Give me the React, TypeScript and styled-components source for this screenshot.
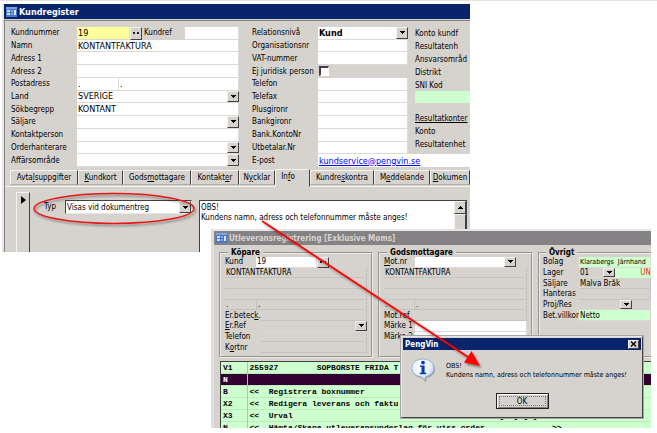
import React from "react";
import styled, { createGlobalStyle, css } from "styled-components";

const face = "#d6d3ce";
const navy = "#08246b";
const mint = "#ceffce";
const shade = "#848284";

const Global = createGlobalStyle`
  *, *::before, *::after { box-sizing: border-box; }
  body { margin: 0; background: #fff; color: #000; }
  body, input, select, textarea, button {
    font-family: "DejaVu Sans Condensed", "DejaVu Sans", Tahoma, sans-serif;
    font-size: 8px;
  }
  u { text-decoration-thickness: 1px; text-underline-offset: 1px; }
`;

const Desktop = styled.main`
  position: relative;
  border-top: 1px solid #e4e2de;
  padding: 3px 6px 5px 2px;
  overflow: hidden;
`;

const AppWindow = styled.section`
  height: 248px;
  margin-right: 181px;
  background: ${face};
  border-left: 2px solid #e8e6e2;
  overflow: hidden;
`;

const TitleBar = styled.header<{ $inactive?: boolean; $size: number }>`
  display: flex;
  align-items: center;
  gap: 2px;
  height: ${(p) => p.$size}px;
  padding: 0 2px;
  background: ${(p) => (p.$inactive ? shade : navy)};
  color: ${(p) => (p.$inactive ? face : "#fff")};
`;

const Title = styled.h2<{ $size: number }>`
  margin: 0;
  flex: 1;
  font-size: ${(p) => p.$size}px;
  font-weight: bold;
  white-space: pre;
`;

const Client = styled.div`
  margin-top: 1px;
  border-top: 1px solid ${shade};
  border-left: 1px solid ${shade};
  height: 100%;
`;

const FormColumns = styled.div`
  display: flex;
  gap: 13px;
  height: 146px;
  padding: 6px 0 0 6px;
`;

const RowGrid = styled.div<{ $width?: number; $rows: number; $height: number }>`
  display: grid;
  grid-template-rows: repeat(${(p) => p.$rows}, 1fr);
  height: ${(p) => p.$height}px;
  ${(p) => (p.$width ? css`flex: 0 0 ${p.$width}px;` : css`flex: 1 1 0;`)}
  min-width: 0;
`;

const Row = styled.div<{ $label: number }>`
  display: grid;
  grid-template-columns: ${(p) => p.$label}px minmax(0, 1fr);
  align-items: stretch;
  min-height: 0;
`;

const Label = styled.label<{ $width?: number }>`
  display: flex;
  align-items: center;
  white-space: pre;
  line-height: 10px;
  ${(p) =>
    p.$width &&
    css`
      flex: 0 0 ${p.$width}px;
      padding-left: 2px;
    `}
`;

const Cell = styled.div<{ $right?: number }>`
  display: flex;
  min-width: 0;
  min-height: 0;
  margin-right: ${(p) => p.$right ?? 0}px;
`;

type Tone = "white" | "yellow" | "mint" | "flat";
const tones: Record<Tone, string> = { white: "#fff", yellow: "#ffff9c", mint, flat: face };

const Input = styled.input<{ $tone?: Tone; $width?: number; $size?: number }>`
  ${(p) => (p.$width ? css`flex: 0 0 ${p.$width}px; width: ${p.$width}px;` : css`flex: 1 1 0; width: 100%;`)}
  min-width: 0;
  height: 100%;
  padding: 0 1px;
  border: 0;
  border-bottom: 1px solid ${(p) => (p.$tone === "flat" ? "#c6c3be" : "#dcdad6")};
  border-right: 1px solid ${(p) => (p.$tone === "flat" ? "#c6c3be" : "#dcdad6")};
  border-radius: 0;
  outline: 0;
  background: ${(p) => tones[p.$tone ?? "white"]};
  font-size: ${(p) => p.$size ?? 9}px;
`;

const Select = styled.select<{ $bold?: boolean; $size?: number }>`
  appearance: none;
  flex: 1 1 0;
  min-width: 0;
  height: 100%;
  padding: 0 1px;
  border: 0;
  border-radius: 0;
  outline: 0;
  background: inherit;
  color: #000;
  font-size: ${(p) => p.$size ?? 9}px;
  font-weight: ${(p) => (p.$bold ? "bold" : "normal")};
`;

const ComboFrame = styled.div<{ $tone?: Tone; $sunken?: boolean; $width?: number }>`
  display: flex;
  ${(p) => (p.$width ? css`flex: 0 0 ${p.$width}px;` : css`flex: 1 1 0;`)}
  min-width: 0;
  height: 100%;
  background: ${(p) => tones[p.$tone ?? "white"]};
  border-bottom: 1px solid #dcdad6;
  ${(p) =>
    p.$sunken &&
    css`
      border: 1px solid #e8e6e2;
      border-top-color: #424142;
      border-left-color: #424142;
    `}
`;

const raised = css`
  background: ${face};
  border: 1px solid;
  border-color: #f4f3f0 #424142 #424142 #f4f3f0;
`;

const DropMark = styled.span`
  ${raised}
  flex: 0 0 12px;
  display: grid;
  place-items: center;
  pointer-events: none;
`;

const MoreButton = styled.button`
  ${raised}
  flex: 0 0 12px;
  display: grid;
  place-items: center;
  padding: 0;
`;

const Arrow = ({ up }: { up?: boolean }) => (
  <svg width="5" height="3" viewBox="0 0 5 3" aria-hidden="true" shapeRendering="crispEdges">
    <path d={up ? "M0 3h5L2.5 0z" : "M0 0h5L2.5 3z"} fill="#000" />
  </svg>
);

const Dots = () => (
  <svg width="6" height="2" viewBox="0 0 6 2" aria-hidden="true">
    <path d="M0 0h2v2H0zM4 0h2v2H4z" fill="#222" />
  </svg>
);

const FormIcon = () => (
  <svg width="11" height="10" viewBox="0 0 11 10" aria-hidden="true">
    <rect width="11" height="10" fill="#4a78c8" />
    <rect width="11" height="2" fill="#7ba3e6" />
    <path d="M1 4h3M1 7h3" stroke="#fff" strokeWidth="1.6" />
    <path d="M5 4h2M5 7h2" stroke="#b8cff4" strokeWidth="1.2" />
    <rect x="8" y="3" width="2" height="5" fill="#dbe7fb" />
  </svg>
);

type ComboProps = {
  id: string;
  value?: string;
  bold?: boolean;
  tone?: Tone;
  sunken?: boolean;
  width?: number;
  size?: number;
};

const Combo = ({ id, value = "", bold, tone, sunken, width, size }: ComboProps) => (
  <ComboFrame $tone={tone} $sunken={sunken} $width={width}>
    <Select id={id} $bold={bold} $size={size} defaultValue={value}>
      <option value={value}>{value}</option>
    </Select>
    <DropMark>
      <Arrow />
    </DropMark>
  </ComboFrame>
);

const SideColumn = styled.div`
  display: flex;
  flex-direction: column;
  flex: 0 0 55px;
  margin-left: -68px;
  height: 124px;
`;

const SideLabel = styled.label`
  line-height: 13px;
  height: 13px;
  white-space: nowrap;
`;

const SideHeading = styled.span`
  margin-top: 9px;
  line-height: 13px;
  text-decoration: underline;
  white-space: nowrap;
`;

const SniInput = styled.input`
  width: 100%;
  height: 12px;
  margin-top: -1px;
  border: 0;
  padding: 0;
  background: ${mint};
`;

const Check = styled.input`
  appearance: none;
  width: 10px;
  height: 10px;
  margin: 1px;
  background: #fff;
  border: 1px solid #fff;
  border-top: 2px solid #424142;
  border-left: 2px solid #424142;
`;

const MailLink = styled.a`
  display: flex;
  align-items: center;
  flex: 1;
  background: #fff;
  color: #0000ff;
  padding-left: 1px;
  font-size: 9px;
  white-space: nowrap;
`;

const Tabs = styled.nav`
  display: flex;
  align-items: flex-end;
  height: 20px;
  padding-left: 5px;
  border-bottom: 1px solid #f4f3f0;
`;

const Tab = styled.button<{ $width: number; $active?: boolean }>`
  flex: 0 0 ${(p) => p.$width}px;
  height: ${(p) => (p.$active ? 18 : 15)}px;
  margin: ${(p) => (p.$active ? "0 0 -1px" : "0 0 1px")};
  padding: ${(p) => (p.$active ? "0 9px 3px 0" : "0")};
  background: ${face};
  border: 1px solid #f4f3f0;
  border-right: 1px solid #424142;
  border-bottom-color: ${(p) => (p.$active ? face : "#b0aeaa")};
  white-space: nowrap;
  overflow: hidden;
`;

const Sheet = styled.div`
  display: flex;
  padding: 5px 3px 0 11px;
`;

const Selector = styled.div`
  flex: 0 0 14px;
  height: 60px;
  border-left: 1px solid #f4f3f0;
  border-top: 1px solid #f4f3f0;
  border-right: 1px solid #424142;
  padding: 3px 0 0 4px;
`;

const TypeField = styled.div`
  display: grid;
  grid-template-columns: 21px 127px;
  height: 14px;
  margin: 8px 7px 0 14px;
`;

const NoteBox = styled.div`
  display: flex;
  flex: 1;
  height: 54px;
  margin-top: 8px;
  border: 1px solid #424142;
  background: #fff;
`;

const Note = styled.textarea`
  flex: 1;
  min-width: 0;
  padding: 2px 1px 0;
  border: 0;
  outline: 0;
  resize: none;
  overflow: hidden;
  white-space: pre;
  background: transparent;
  font-size: 8px;
  line-height: 10px;
`;

const Scroll = styled.div`
  flex: 0 0 12px;
  background: #f0efec;
  display: grid;
  grid-template-rows: 13px 1fr;
`;

const ScrollPart = styled.span`
  ${raised}
  display: grid;
  place-items: center;
`;

const DeliveryWindow = styled.section`
  position: relative;
  height: 199px;
  margin: -23px 0 0 209px;
  background: ${face};
  border-top: 2px solid #e8e6e2;
  border-left: 3px solid #e0deda;
  overflow: hidden;
`;

const Groups = styled.div`
  display: flex;
  gap: 5px;
  padding: 3px 0 0 5px;
`;

const Group = styled.fieldset<{ $width?: number }>`
  ${(p) => (p.$width ? css`flex: 0 0 ${p.$width}px;` : css`flex: 1 1 0;`)}
  min-width: 0;
  height: 110px;
  margin: 0;
  padding: 0 4px;
  border: 2px groove #eceae6;
  ${(p) => !p.$width && css`border-right: 0; padding: 0 0 0 3px;`}
`;

const Legend = styled.legend`
  margin-left: 3px;
  padding: 0 3px;
  font-size: 8px;
  line-height: 9px;
  font-weight: bold;
`;

const ListFrame = styled.div`
  margin: 3px 0 0 6px;
  border-top: 1px solid #424142;
  border-left: 1px solid #424142;
  background: ${mint};
`;

const ListTable = styled.table`
  width: 100%;
  table-layout: fixed;
  border-collapse: collapse;
  font-family: "Liberation Mono", "Courier New", monospace;
  font-size: 8px;
  font-weight: bold;
  line-height: 12px;
`;

const ListRow = styled.tr<{ $picked?: boolean }>`
  height: 12px;
  background: ${(p) => (p.$picked ? "#310031" : mint)};
  color: ${(p) => (p.$picked ? "#fff" : "#000")};
  box-shadow: inset 0 -1px #bcecbc;
`;

const ListCell = styled.td<{ $code?: boolean }>`
  width: ${(p) => (p.$code ? "26px" : "auto")};
  padding: 0 0 0 2px;
  border-right: ${(p) => (p.$code ? "1px solid #a9c9a9" : "0")};
  white-space: pre;
  overflow: hidden;
`;

const Warn = styled.output`
  display: flex;
  flex: 1;
  align-items: center;
  justify-content: flex-end;
  background: ${mint};
  color: #f03020;
  overflow: hidden;
`;

const Dialog = styled.section`
  position: absolute;
  top: 335px;
  right: 14px;
  width: 242px;
  z-index: 2;
  background: ${face};
  border: 1px solid;
  border-color: #e8e6e2 #424142 #424142 #e8e6e2;
  padding: 1px;
  box-shadow: 0 0 0 1px #a8a6a2;
`;

const CloseButton = styled.button`
  ${raised}
  width: 11px;
  height: 9px;
  padding: 0;
  display: grid;
  place-items: center;
`;

const Message = styled.div`
  display: flex;
  gap: 11px;
  padding: 8px 0 0 8px;
`;

const MessageText = styled.p`
  margin: 4px 0 0;
  font-size: 7px;
  line-height: 9px;
  white-space: pre;
`;

const DialogActions = styled.div`
  display: flex;
  justify-content: center;
  padding: 10px 0 7px;
`;

const OkButton = styled.button`
  width: 53px;
  height: 16px;
  padding: 0;
  background: ${face};
  border: 1px solid #222;
  box-shadow: inset 1px 1px #fff, inset -1px -1px ${shade};
  outline: 1px dotted #777;
  outline-offset: -4px;
`;

const Overlay = styled.svg`
  position: absolute;
  top: -1px;
  left: 0;
  z-index: 3;
  pointer-events: none;
`;

const BubbleSvg = styled.svg`
  flex: none;
`;

const InfoBubble = () => (
  <BubbleSvg width="24" height="25" viewBox="0 0 24 25" aria-hidden="true">
    <defs>
      <radialGradient id="bubble" cx="0.4" cy="0.3" r="0.75">
        <stop offset="0" stopColor="#fff" />
        <stop offset="0.6" stopColor="#e9f0fb" />
        <stop offset="1" stopColor="#9db8de" />
      </radialGradient>
    </defs>
    <path
      d="M12 1C5.8 1 1 4.8 1 10c0 4.400 3.400 7.600 8 8.600l1.500.3 3.500 4.300.6-4.500c5-1 8.400-4.300 8.400-8.700C23 4.800 18.200 1 12 1z"
      transform="translate(1 1.500)"
      fill="#8d8b88"
      opacity="0.6"
    />
    <path
      d="M12 1C5.800 1 1 4.800 1 10c0 4.400 3.400 7.600 8 8.600l1.500.3 3.500 4.300.6-4.500c5-1 8.400-4.300 8.400-8.700C23 4.800 18.200 1 12 1z"
      fill="url(#bubble)"
      stroke="#7f9cc8"
      strokeWidth="0.7"
    />
    <circle cx="12" cy="4.600" r="1.900" fill="#0a3ab0" />
    <path d="M9 7.600h4.600v7.200h1.600v1.500H8.800v-1.500h1.700V9.100H9z" fill="#0a3ab0" />
  </BubbleSvg>
);

type FormRow = { label: string; value?: string; kind?: "combo" };

const leftRows: FormRow[] = [
  { label: "Namn", value: "KONTANTFAKTURA" },
  { label: "Adress 1" },
  { label: "Adress 2" },
];
const lowerRows: FormRow[] = [
  { label: "Land", value: "SVERIGE", kind: "combo" },
  { label: "Sökbegrepp", value: "KONTANT" },
  { label: "Säljare", kind: "combo" },
  { label: "Kontaktperson" },
  { label: "Orderhanterare", kind: "combo" },
  { label: "Affärsområde", kind: "combo" },
];

const renderRow = (r: FormRow) => (
  <Row $label={66} key={r.label}>
    <Label htmlFor={`kr-${r.label}`}>{r.label}</Label>
    <Cell>
      {r.kind ? (
        <Combo id={`kr-${r.label}`} value={r.value} />
      ) : (
        <Input id={`kr-${r.label}`} defaultValue={r.value} />
      )}
    </Cell>
  </Row>
);

const PlainRow = ({ label }: { label: string }) => (
  <Row $label={66}>
    <Label htmlFor={`kr-${label}`}>{label}</Label>
    <Cell $right={62}>
      <Input id={`kr-${label}`} />
    </Cell>
  </Row>
);

const tabs: { pre: string; key: string; post: string; width: number; active?: boolean }[] = [
  { pre: "Avta", key: "l", post: "suppgifter", width: 68 },
  { pre: "", key: "K", post: "undkort", width: 45 },
  { pre: "Gods", key: "m", post: "ottagare", width: 68 },
  { pre: "Kontakt", key: "e", post: "r", width: 48 },
  { pre: "N", key: "y", post: "cklar", width: 36 },
  { pre: "In", key: "f", post: "o", width: 35, active: true },
  { pre: "Kundre", key: "s", post: "kontra", width: 64 },
  { pre: "M", key: "e", post: "ddelande", width: 56 },
  { pre: "", key: "D", post: "okumen", width: 40 },
];

const CustomerWindow = () => (
  <AppWindow>
    <TitleBar $size={15}>
      <FormIcon />
      <Title $size={9}>Kundregister</Title>
    </TitleBar>
    <Client>
      <FormColumns>
        <RowGrid $width={228} $rows={11} $height={140}>
          <Row $label={66}>
            <Label htmlFor="kundnummer">Kundnummer</Label>
            <Cell>
              <Input id="kundnummer" $tone="yellow" $width={53} defaultValue="19" />
              <MoreButton aria-label="Sök kund">
                <Dots />
              </MoreButton>
              <Label htmlFor="kundref" $width={43}>Kundref</Label>
              <Input id="kundref" />
            </Cell>
          </Row>
          {leftRows.map(renderRow)}
          <Row $label={66}>
            <Label htmlFor="postnr">Postadress</Label>
            <Cell>
              <Input id="postnr" $width={42} defaultValue="." />
              <Input aria-label="Postort" defaultValue="." />
            </Cell>
          </Row>
          {lowerRows.map(renderRow)}
        </RowGrid>
        <RowGrid $rows={11} $height={140}>
          <Row $label={66}>
            <Label htmlFor="relation">Relationsnivå</Label>
            <Cell $right={62}>
              <Combo id="relation" value="Kund" bold />
            </Cell>
          </Row>
          <PlainRow label="Organisationsnr" />
          <PlainRow label="VAT-nummer" />
          <Row $label={66}>
            <Label htmlFor="juridisk">Ej juridisk person</Label>
            <Cell>
              <Check type="checkbox" id="juridisk" />
            </Cell>
          </Row>
          {["Telefon", "Telefax", "Plusgironr", "Bankgironr", "Bank.KontoNr", "Utbetalar.Nr"].map((l) => (
            <PlainRow label={l} key={l} />
          ))}
          <Row $label={66}>
            <Label as="span">E-post</Label>
            <Cell>
              <MailLink href="mailto:kundservice@pengvin.se">kundservice@pengvin.se</MailLink>
            </Cell>
          </Row>
        </RowGrid>
        <SideColumn>
          <SideLabel as="span">Konto kundf</SideLabel>
          <SideLabel as="span">Resultatenh</SideLabel>
          <SideLabel as="span">Ansvarsområd</SideLabel>
          <SideLabel as="span">Distrikt</SideLabel>
          <SideLabel htmlFor="sni">SNI Kod</SideLabel>
          <SniInput id="sni" />
          <SideHeading>Resultatkonter</SideHeading>
          <SideLabel as="span">Konto</SideLabel>
          <SideLabel as="span">Resultatenhet</SideLabel>
        </SideColumn>
      </FormColumns>
      <Tabs>
        {tabs.map((t) => (
          <Tab key={t.pre + t.key + t.post} $width={t.width} $active={t.active}>
            {t.pre}
            <u>{t.key}</u>
            {t.post}
          </Tab>
        ))}
      </Tabs>
      <Sheet>
        <Selector>
          <svg width="6" height="8" viewBox="0 0 6 8" aria-hidden="true">
            <path d="M0 0l5 4-5 4z" fill="#000" />
          </svg>
        </Selector>
        <TypeField>
          <Label htmlFor="typ">Typ</Label>
          <Combo id="typ" value="Visas vid dokumentreg" sunken size={8} />
        </TypeField>
        <NoteBox>
          <Note
            aria-label="Info"
            defaultValue={"OBS!\nKundens namn, adress och telefonnummer måste anges!"}
          />
          <Scroll>
            <ScrollPart>
              <Arrow up />
            </ScrollPart>
            <ScrollPart />
          </Scroll>
        </NoteBox>
      </Sheet>
    </Client>
  </AppWindow>
);

const Flat = ({ label, value, width }: { label: string; value?: string; width?: number }) => (
  <Input $tone="flat" $size={8} aria-label={label} defaultValue={value} $width={width} />
);

const listRows: [string, string, boolean?][] = [
  ["V1", "255927        SOPBORSTE FRIDA T"],
  ["N", "", true],
  ["B", "<<  Registrera boxnummer"],
  ["X2", "<<  Redigera leverans och faktu"],
  ["X3", "<<  Urval" + " ".repeat(43) + "[  ] [ ]"],
  ["N", "<<  Hämta/Skapa utleveransunderlag för viss order" + " ".repeat(14) + ">>"],
];

const Delivery = () => (
  <DeliveryWindow>
    <TitleBar $size={14} $inactive>
      <FormIcon />
      <Title $size={8}>Utleveransregistrering [Exklusive Moms]</Title>
    </TitleBar>
    <Groups>
      <Group $width={154}>
        <Legend>Köpare</Legend>
        <RowGrid $rows={9} $height={96}>
          <Row $label={31}>
            <Label htmlFor="kund">Kund</Label>
            <Cell $right={38}>
              <Input id="kund" $size={8} defaultValue="19" />
              <MoreButton aria-label="Sök köpare">
                <Dots />
              </MoreButton>
            </Cell>
          </Row>
          <Flat label="Köparens namn" value="KONTANTFAKTURA" />
          <Flat label="Köparens adress 1" />
          <Flat label="Köparens adress 2" />
          <Cell>
            <Flat label="Köparens postnr" value="." width={32} />
            <Flat label="Köparens ort" value="." />
          </Cell>
          <Row $label={36}>
            <Label htmlFor="erbeteck"><span>Er.betec<u>k</u>.</span></Label>
            <Cell><Input id="erbeteck" $tone="flat" /></Cell>
          </Row>
          <Row $label={36}>
            <Label htmlFor="erref"><u>E</u>r.Ref</Label>
            <Cell><Combo id="erref" tone="flat" size={8} /></Cell>
          </Row>
          <Row $label={36}>
            <Label htmlFor="tel">Telefon</Label>
            <Cell><Input id="tel" $tone="flat" /></Cell>
          </Row>
          <Row $label={36}>
            <Label htmlFor="kort">K<u>o</u>rtnr</Label>
            <Cell><Input id="kort" $tone="flat" /></Cell>
          </Row>
        </RowGrid>
      </Group>
      <Group $width={155}>
        <Legend>Godsmottagare</Legend>
        <RowGrid $rows={9} $height={96}>
          <Row $label={31}>
            <Label htmlFor="motnr"><u>M</u>ot.nr</Label>
            <Cell $right={11}><Combo id="motnr" size={8} /></Cell>
          </Row>
          <Flat label="Mottagarens namn" value="KONTANTFAKTURA" />
          <Flat label="Mottagarens adress 1" />
          <Flat label="Mottagarens adress 2" />
          <Cell>
            <Flat label="Mottagarens postnr" value="." width={31} />
            <Flat label="Mottagarens ort" value="." />
          </Cell>
          <Row $label={31}>
            <Label htmlFor="motref">Mot.ref</Label>
            <Cell><Input id="motref" $tone="flat" /></Cell>
          </Row>
          <Row $label={31}>
            <Label htmlFor="marke1">Märke 1</Label>
            <Cell><Input id="marke1" /></Cell>
          </Row>
          <Row $label={31}>
            <Label htmlFor="marke2">Märke 2</Label>
            <Cell><Input id="marke2" /></Cell>
          </Row>
        </RowGrid>
      </Group>
      <Group>
        <Legend>Övrigt</Legend>
        <RowGrid $rows={9} $height={96}>
          <Row $label={36}>
            <Label htmlFor="bolag">Bolag</Label>
            <Cell><Input id="bolag" $tone="mint" $size={7} defaultValue="Klarabergs  Järnhand" /></Cell>
          </Row>
          <Row $label={36}>
            <Label htmlFor="lager">Lager</Label>
            <Cell>
              <Combo id="lager" value="01" tone="flat" width={36} size={8} />
              <Warn>UN</Warn>
            </Cell>
          </Row>
          <Row $label={36}>
            <Label htmlFor="saljare2">Säljare</Label>
            <Cell><Input id="saljare2" $tone="flat" $size={8} defaultValue="Malva Bråk" /></Cell>
          </Row>
          <Row $label={36}>
            <Label htmlFor="hanteras">Hanteras</Label>
            <Cell><Input id="hanteras" $tone="flat" /></Cell>
          </Row>
          <Row $label={36}>
            <Label htmlFor="projres">Proj/Res</Label>
            <Cell><Combo id="projres" tone="flat" width={53} size={8} /></Cell>
          </Row>
          <Row $label={36}>
            <Label htmlFor="betvillkor">Bet.villkor</Label>
            <Cell><Input id="betvillkor" $tone="mint" $size={8} defaultValue="Netto" /></Cell>
          </Row>
        </RowGrid>
      </Group>
    </Groups>
    <ListFrame>
      <ListTable>
        <tbody>
          {listRows.map(([code, text, picked], i) => (
            <ListRow key={i} $picked={picked}>
              <ListCell $code>{code}</ListCell>
              <ListCell>{text}</ListCell>
            </ListRow>
          ))}
        </tbody>
      </ListTable>
    </ListFrame>
  </DeliveryWindow>
);

export default function App() {
  return (
    <>
      <Global />
      <Desktop>
        <CustomerWindow />
        <Delivery />
        <Dialog role="dialog" aria-labelledby="dialog-title">
          <TitleBar $size={12}>
            <Title $size={8} id="dialog-title">PengVin</Title>
            <CloseButton aria-label="Stäng">
              <svg width="7" height="6" viewBox="0 0 7 6" aria-hidden="true">
                <path d="M1 0.500l5 5M6 0.500l-5 5" stroke="#000" strokeWidth="1.300" />
              </svg>
            </CloseButton>
          </TitleBar>
          <Message>
            <InfoBubble />
            <MessageText>{"OBS!\nKundens namn, adress och telefonnummer måste anges!"}</MessageText>
          </Message>
          <DialogActions>
            <OkButton>OK</OkButton>
          </DialogActions>
        </Dialog>
        <Overlay width="657" height="433" viewBox="0 0 657 433" aria-hidden="true">
          <defs>
            <filter id="soft" x="-10%" y="-10%" width="120%" height="130%">
              <feDropShadow dx="1.500" dy="2" stdDeviation="1.200" floodColor="#000" floodOpacity="0.400" />
            </filter>
          </defs>
          <g filter="url(#soft)">
            <ellipse cx="114" cy="208.500" rx="80" ry="15" fill="none" stroke="#e81818" strokeWidth="1.500" />
            <path d="M262 221L471 359" stroke="#ff0000" strokeWidth="1.800" />
            <path d="M480 366l-16-3.500 7.500-11.500z" fill="#ff0000" />
          </g>
        </Overlay>
      </Desktop>
    </>
  );
}
